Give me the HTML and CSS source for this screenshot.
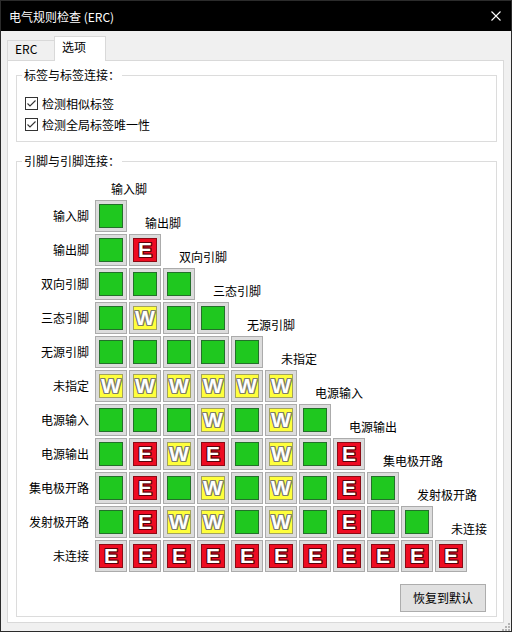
FILE: index.html
```html
<!DOCTYPE html>
<html lang="zh-CN">
<head>
<meta charset="utf-8">
<title>电气规则检查 (ERC)</title>
<link rel="stylesheet" href="styles.css">
</head>
<body>
<div class="window">
  <div class="titlebar">
    <span class="title">电气规则检查 (ERC)</span>
    <svg class="close" width="10" height="10" viewBox="0 0 10 10"><path d="M0.5 0.5L9.5 9.5M9.5 0.5L0.5 9.5" stroke="#fff" stroke-width="1.1" fill="none"/></svg>
  </div>
  <div class="content">
    <div class="tabs">
      <div class="tab tab-off">ERC</div>
      <div class="tab tab-on">选项</div>
    </div>
    <div class="panel">
      <div class="group">
        <div class="gtitle">标签与标签连接：</div>
        <div class="checks">
          <label class="check"><svg width="13" height="13" viewBox="0 0 13 13"><rect x="0.5" y="0.5" width="12" height="12" fill="#fff" stroke="#333"/><path d="M2.5 6.5L5 9L10.5 3.5" stroke="#333" stroke-width="1.1" fill="none"/></svg>检测相似标签</label>
          <label class="check"><svg width="13" height="13" viewBox="0 0 13 13"><rect x="0.5" y="0.5" width="12" height="12" fill="#fff" stroke="#333"/><path d="M2.5 6.5L5 9L10.5 3.5" stroke="#333" stroke-width="1.1" fill="none"/></svg>检测全局标签唯一性</label>
        </div>
      </div>
      <div class="group group2">
        <div class="gtitle">引脚与引脚连接：</div>
        <div class="matrix">
          <div class="mrow head"><span class="rlabel"></span><span class="clabel">输入脚</span></div>
          <div class="mrow"><span class="rlabel">输入脚</span><span class="cell"><i class="g"></i></span><span class="clabel">输出脚</span></div>
          <div class="mrow"><span class="rlabel">输出脚</span><span class="cell"><i class="g"></i></span><span class="cell"><i class="e">E</i></span><span class="clabel">双向引脚</span></div>
          <div class="mrow"><span class="rlabel">双向引脚</span><span class="cell"><i class="g"></i></span><span class="cell"><i class="g"></i></span><span class="cell"><i class="g"></i></span><span class="clabel">三态引脚</span></div>
          <div class="mrow"><span class="rlabel">三态引脚</span><span class="cell"><i class="g"></i></span><span class="cell"><i class="w">W</i></span><span class="cell"><i class="g"></i></span><span class="cell"><i class="g"></i></span><span class="clabel">无源引脚</span></div>
          <div class="mrow"><span class="rlabel">无源引脚</span><span class="cell"><i class="g"></i></span><span class="cell"><i class="g"></i></span><span class="cell"><i class="g"></i></span><span class="cell"><i class="g"></i></span><span class="cell"><i class="g"></i></span><span class="clabel">未指定</span></div>
          <div class="mrow"><span class="rlabel">未指定</span><span class="cell"><i class="w">W</i></span><span class="cell"><i class="w">W</i></span><span class="cell"><i class="w">W</i></span><span class="cell"><i class="w">W</i></span><span class="cell"><i class="w">W</i></span><span class="cell"><i class="w">W</i></span><span class="clabel">电源输入</span></div>
          <div class="mrow"><span class="rlabel">电源输入</span><span class="cell"><i class="g"></i></span><span class="cell"><i class="g"></i></span><span class="cell"><i class="g"></i></span><span class="cell"><i class="w">W</i></span><span class="cell"><i class="g"></i></span><span class="cell"><i class="w">W</i></span><span class="cell"><i class="g"></i></span><span class="clabel">电源输出</span></div>
          <div class="mrow"><span class="rlabel">电源输出</span><span class="cell"><i class="g"></i></span><span class="cell"><i class="e">E</i></span><span class="cell"><i class="w">W</i></span><span class="cell"><i class="e">E</i></span><span class="cell"><i class="g"></i></span><span class="cell"><i class="w">W</i></span><span class="cell"><i class="g"></i></span><span class="cell"><i class="e">E</i></span><span class="clabel">集电极开路</span></div>
          <div class="mrow"><span class="rlabel">集电极开路</span><span class="cell"><i class="g"></i></span><span class="cell"><i class="e">E</i></span><span class="cell"><i class="g"></i></span><span class="cell"><i class="w">W</i></span><span class="cell"><i class="g"></i></span><span class="cell"><i class="w">W</i></span><span class="cell"><i class="g"></i></span><span class="cell"><i class="e">E</i></span><span class="cell"><i class="g"></i></span><span class="clabel">发射极开路</span></div>
          <div class="mrow"><span class="rlabel">发射极开路</span><span class="cell"><i class="g"></i></span><span class="cell"><i class="e">E</i></span><span class="cell"><i class="w">W</i></span><span class="cell"><i class="w">W</i></span><span class="cell"><i class="g"></i></span><span class="cell"><i class="w">W</i></span><span class="cell"><i class="g"></i></span><span class="cell"><i class="e">E</i></span><span class="cell"><i class="g"></i></span><span class="cell"><i class="g"></i></span><span class="clabel">未连接</span></div>
          <div class="mrow"><span class="rlabel">未连接</span><span class="cell"><i class="e">E</i></span><span class="cell"><i class="e">E</i></span><span class="cell"><i class="e">E</i></span><span class="cell"><i class="e">E</i></span><span class="cell"><i class="e">E</i></span><span class="cell"><i class="e">E</i></span><span class="cell"><i class="e">E</i></span><span class="cell"><i class="e">E</i></span><span class="cell"><i class="e">E</i></span><span class="cell"><i class="e">E</i></span><span class="cell"><i class="e">E</i></span></div>
        </div>
        <div class="actions"><button class="btn" type="button">恢复到默认</button></div>
      </div>
    </div>
  </div>
  <svg class="grip" width="10" height="9" viewBox="0 0 10 9"><g fill="#b4b4b4"><rect x="8" y="1" width="2" height="2"/><rect x="5" y="4" width="2" height="2"/><rect x="8" y="4" width="2" height="2"/><rect x="2" y="7" width="2" height="2"/><rect x="5" y="7" width="2" height="2"/><rect x="8" y="7" width="2" height="2"/></g></svg>
</div>
</body>
</html>
```
FILE: styles.css
```css
body {
  margin: 0;
  font-family: "Noto Sans CJK SC", "Noto Sans", sans-serif;
  font-size: 12px;
  line-height: 14px;
  color: #000;
}

.window {
  position: relative;
  width: 512px;
  height: 632px;
  box-sizing: border-box;
  border: 1px solid #2b2b2b;
  background: #f0f0f0;
  display: flex;
  flex-direction: column;
}

.titlebar {
  flex: none;
  height: 30px;
  background: #000;
  color: #fff;
  display: flex;
  align-items: center;
  justify-content: space-between;
  padding: 0 10px 0 8px;
}

.title {
  padding-top: 1px;
}

.close {
  display: block;
}

.content {
  flex: none;
  padding: 5px 7px 0 6px;
}

.tabs {
  display: flex;
  align-items: flex-end;
  height: 25px;
  margin-bottom: -1px;
  position: relative;
  z-index: 1;
}

.tab {
  box-sizing: border-box;
  border: 1px solid #d9d9d9;
  border-bottom: none;
}

.tab-off {
  width: 47px;
  height: 20px;
  border-right: none;
  padding: 1px 0 0 7px;
  margin-bottom: 1px;
}

.tab-on {
  width: 52px;
  height: 25px;
  background: #fff;
  padding: 3px 0 0 7px;
}

.panel {
  background: #fff;
  border: 1px solid #d9d9d9;
  padding: 14px 6px 5px 8px;
}

.group {
  border: 1px solid #dcdcdc;
}

.group2 {
  margin-top: 19px;
}

.gtitle {
  width: fit-content;
  margin: -8px 0 0 5px;
  padding: 0 2px;
  background: #fff;
}

.checks {
  padding: 11px 0 6px 8px;
}

.check {
  display: flex;
  align-items: center;
  height: 21px;
}

.check svg {
  display: block;
  margin-right: 4px;
  flex: none;
}

.matrix {
  margin-top: 14px;
  display: flex;
  flex-direction: column;
  gap: 2px;
}

.mrow {
  display: flex;
  gap: 2px;
  height: 32px;
}

.mrow.head {
  height: 16px;
}

.rlabel {
  flex: none;
  width: 72px;
  margin-right: 4px;
  text-align: right;
  align-self: center;
}

.clabel {
  padding-left: 16px;
  align-self: flex-end;
  margin-bottom: 2px;
  white-space: nowrap;
}

.cell {
  flex: none;
  box-sizing: border-box;
  width: 32px;
  height: 32px;
  border: 1px solid #ababab;
  background: #dcdcdc;
  padding: 3px;
}

.cell i {
  display: flex;
  box-sizing: border-box;
  width: 24px;
  height: 24px;
  border: 1px solid;
  align-items: center;
  justify-content: center;
  font-family: "Liberation Sans", Arial, sans-serif;
  font-weight: bold;
  font-style: normal;
  font-size: 21px;
  line-height: 22px;
  color: #fff;
}

.cell .g {
  background: #1fc81f;
  border-color: #23702a;
}

.cell .e {
  background: #ee0c22;
  border-color: #8c0a14;
  text-shadow: 1px 0 #5a0008, -1px 0 #5a0008, 0 1px #5a0008, 0 -1px #5a0008,
    1px 1px #5a0008, -1px -1px #5a0008, 1px -1px #5a0008, -1px 1px #5a0008;
}

.cell .w {
  background: #ffff3c;
  border-color: #a3a35a;
  text-shadow: 1px 0 #7d7d6a, -1px 0 #7d7d6a, 0 1px #7d7d6a, 0 -1px #7d7d6a,
    1px 1px #7d7d6a, -1px -1px #7d7d6a, 1px -1px #7d7d6a, -1px 1px #7d7d6a;
}

.actions {
  display: flex;
  justify-content: flex-end;
  padding: 12px 10px 4px 0;
}

.btn {
  width: 86px;
  height: 28px;
  box-sizing: border-box;
  border: 1px solid #adadad;
  background: #e1e1e1;
  font: inherit;
  color: #000;
  padding: 0;
}

.grip {
  position: absolute;
  right: 1px;
  bottom: 0;
  display: block;
}
```
